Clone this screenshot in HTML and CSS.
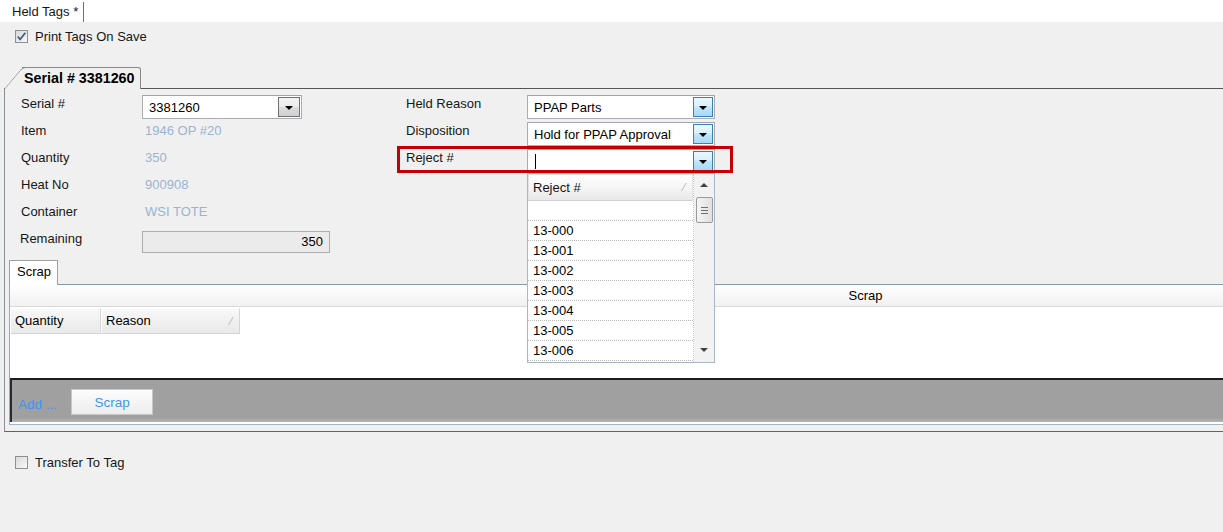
FILE: index.html
```html
<!DOCTYPE html>
<html lang="en">
<head>
  <meta charset="UTF-8">
  <meta name="viewport" content="width=device-width, initial-scale=1.0">
  <title>Held Tags</title>
  <link rel="stylesheet" href="styles.css">
</head>
<body>

<div class="doc-tabs">
  <div class="doc-tab">Held Tags *</div>
</div>

<div class="check-row print-row">
  <span class="checkbox">
    <svg width="11" height="11" viewBox="0 0 11 11"><path d="M1.8 5.6 L4.2 8.4 L9.4 1.8" fill="none" stroke="#4b5f84" stroke-width="1.8"/></svg>
  </span>
  <span>Print Tags On Save</span>
</div>

<div class="serial-block">
  <div class="tab-strip">
    <div class="serial-tab"><span>Serial # 3381260</span></div>
  </div>

  <div class="serial-panel">
    <div class="fields">
      <!-- tag details -->
      <div class="field-col">
        <div class="field-row">
          <div class="label">Serial #</div>
          <div class="combo combo-serial">
            <span class="combo-text">3381260</span>
            <span class="combo-btn grey"><i class="arrow"></i></span>
          </div>
        </div>
        <div class="field-row"><div class="label">Item</div><div class="value">1946 OP #20</div></div>
        <div class="field-row"><div class="label">Quantity</div><div class="value">350</div></div>
        <div class="field-row"><div class="label">Heat No</div><div class="value">900908</div></div>
        <div class="field-row"><div class="label">Container</div><div class="value">WSI TOTE</div></div>
        <div class="field-row">
          <div class="label remaining">Remaining</div>
          <div class="readonly-box">350</div>
        </div>
      </div>

      <!-- hold info -->
      <div class="field-col">
        <div class="field-row">
          <div class="label">Held Reason</div>
          <div class="combo">
            <span class="combo-text">PPAP Parts</span>
            <span class="combo-btn"><i class="arrow"></i></span>
          </div>
        </div>
        <div class="field-row">
          <div class="label">Disposition</div>
          <div class="combo">
            <span class="combo-text">Hold for PPAP Approval</span>
            <span class="combo-btn"><i class="arrow"></i></span>
          </div>
        </div>
        <div class="field-row">
          <div class="label">Reject #</div>
          <div class="combo combo-open">
            <span class="combo-text"><span class="caret"></span></span>
            <span class="combo-btn"><i class="arrow"></i></span>

            <div class="dropdown">
              <div class="dd-list">
                <div class="dd-head">Reject #<span class="sort-mark">&#8260;</span></div>
                <div class="dd-row"></div>
                <div class="dd-row">13-000</div>
                <div class="dd-row">13-001</div>
                <div class="dd-row">13-002</div>
                <div class="dd-row">13-003</div>
                <div class="dd-row">13-004</div>
                <div class="dd-row">13-005</div>
                <div class="dd-row">13-006</div>
              </div>
              <div class="dd-scroll">
                <span class="sb-up"></span>
                <span class="sb-thumb"><i></i><i></i><i></i></span>
                <span class="sb-down"></span>
              </div>
            </div>
          </div>
          <div class="highlight"></div>
        </div>
      </div>
    </div>

    <div class="scrap-tabs">
      <div class="scrap-tab">Scrap</div>
    </div>
    <div class="scrap-panel">
      <div class="grid-group">Scrap</div>
      <div class="grid-cols">
        <div class="col-head col-qty">Quantity</div>
        <div class="col-head col-reason">Reason<span class="sort-mark">&#8260;</span></div>
      </div>
      <div class="grid-body"></div>
      <div class="action-bar">
        <span class="add-link">Add ...</span>
        <button class="scrap-btn">Scrap</button>
      </div>
    </div>
  </div>
</div>

<div class="check-row transfer-row">
  <span class="checkbox"></span>
  <span>Transfer To Tag</span>
</div>

</body>
</html>
```

FILE: styles.css
```css
html, body {
  margin: 0;
  overflow: hidden;
}

body {
  background: #f0f0f0;
  font-family: "Liberation Sans", Arial, sans-serif;
  font-size: 13px;
  line-height: 15px;
  color: #161616;
}

/* Document tab at the top */
.doc-tabs {
  height: 22px;
  background: #fff;
  padding-left: 4px;
  display: flex;
  align-items: flex-end;
}

.doc-tab {
  height: 20px;
  line-height: 20px;
  padding: 0 5px 0 8px;
  border-right: 1px solid #6f6f6f;
  background: #fff;
}

/* Checkboxes */
.check-row {
  display: flex;
  align-items: center;
  gap: 7px;
  height: 15px;
  padding-left: 15px;
}

.print-row {
  margin-top: 7px;
}

.transfer-row {
  margin-top: 23px;
}

.checkbox {
  width: 13px;
  height: 13px;
  box-sizing: border-box;
  border: 1px solid #8e8f8f;
  background: linear-gradient(135deg, #d8d8d8, #f9f9f9);
  display: flex;
  align-items: center;
  justify-content: center;
}

/* Serial tab + panel */
.tab-strip {
  margin-top: 23px;
  height: 21px;
  display: flex;
}

.serial-tab {
  position: relative;
  z-index: 1;
  margin-left: 22px;
  box-sizing: border-box;
  height: 22px;
  padding: 0 5px 0 2px;
  border-top: 1px solid #8a8a8a;
  border-right: 1px solid #8a8a8a;
  border-top-right-radius: 3px;
  background: #f0f0f0;
  font-weight: bold;
  font-size: 14.3px;
  line-height: 20px;
  color: #000;
}

/* slanted left edge of the tab */
.serial-tab::before {
  content: "";
  position: absolute;
  z-index: -1;
  left: -18px;
  top: -1px;
  width: 26px;
  height: 22px;
  box-sizing: border-box;
  border-left: 1px solid #8a8a8a;
  border-top: 1px solid #8a8a8a;
  border-top-left-radius: 4px;
  background: #f0f0f0;
  transform: skewX(-40deg);
  transform-origin: bottom left;
}

.serial-panel {
  margin-left: 4px;
  border-left: 1px solid #8c8f96;
  border-top: 1px solid #555;
  border-bottom: 1px solid #646464;
  padding: 6px 0;
}

.fields {
  display: flex;
  gap: 76px;
  margin-left: 16px;
}

.field-row {
  position: relative;
  display: flex;
  height: 27px;
}

.label {
  flex: none;
  width: 121px;
  padding-top: 1px;
}

.label.remaining {
  margin-left: -1px;
  width: 122px;
}

.value {
  padding: 1px 0 0 3px;
  color: #99b4d1;
}

/* Combo boxes */
.combo {
  position: relative;
  box-sizing: border-box;
  width: 188px;
  height: 24px;
  border: 1px solid #abadb3;
  border-top-color: #a0a3aa;
  background: #fff;
  display: flex;
  align-items: center;
}

.combo-serial {
  width: 160px;
}

.combo-text {
  flex: 1;
  padding-left: 6px;
  color: #000;
}

.combo-open .combo-text {
  padding-left: 7px;
  display: flex;
  align-items: center;
}

.caret {
  display: inline-block;
  width: 1px;
  height: 15px;
  background: #000;
}

.combo-btn {
  flex: none;
  box-sizing: border-box;
  width: 20px;
  height: 20px;
  margin-right: 1px;
  border: 1px solid #3c7fb1;
  background: linear-gradient(#eaf6fd 0%, #d9f0fc 45%, #bee6fd 50%, #a7d9f5 100%);
  display: flex;
  align-items: center;
  justify-content: center;
}

.combo-btn.grey {
  width: 22px;
  border-color: #707070;
  background: linear-gradient(#f2f2f2 0%, #ebebeb 50%, #dddddd 50%, #cfcfcf 100%);
}

.arrow {
  width: 0;
  height: 0;
  border-left: 4px solid transparent;
  border-right: 4px solid transparent;
  border-top: 4px solid #000;
  margin-top: 1px;
}

.readonly-box {
  box-sizing: border-box;
  width: 188px;
  height: 22px;
  margin-top: 1px;
  border: 1px solid #adadad;
  background: #ebebeb;
  text-align: right;
  padding-right: 6px;
  line-height: 20px;
  color: #000;
}

/* red annotation box round the Reject # row */
.highlight {
  position: absolute;
  left: -9px;
  top: -3px;
  width: 336px;
  height: 27px;
  box-sizing: border-box;
  border: 3px solid #c40000;
  z-index: 5;
  pointer-events: none;
}

/* Open dropdown list */
.dropdown {
  position: absolute;
  left: -1px;
  top: 23px;
  z-index: 10;
  width: 188px;
  height: 190px;
  box-sizing: border-box;
  border: 1px solid #a7b7c8;
  background: #fff;
  display: flex;
}

.dd-list {
  flex: 1;
  border-right: 1px dotted #c8c8c8;
}

.dd-head {
  position: relative;
  box-sizing: border-box;
  height: 27px;
  padding: 1px 0 0 4px;
  line-height: 24px;
  border: 1px solid #e4e4e4;
  border-bottom-color: #cfcfcf;
  background: linear-gradient(#ffffff, #f3f3f3 60%, #e8e8e8);
}

.sort-mark {
  position: absolute;
  right: 7px;
  top: 0;
  color: #b0b0b0;
  font-size: 11px;
}

.dd-row {
  box-sizing: border-box;
  height: 20px;
  padding-left: 5px;
  line-height: 19px;
  border-bottom: 1px dotted #b8b8b8;
  color: #000;
}

.dd-scroll {
  flex: none;
  width: 20px;
  background: #f2f2f2;
  display: flex;
  flex-direction: column;
  align-items: center;
}

.sb-up,
.sb-down {
  width: 0;
  height: 0;
  border-left: 4px solid transparent;
  border-right: 4px solid transparent;
}

.sb-up {
  margin-top: 9px;
  border-bottom: 4px solid #404040;
}

.sb-down {
  margin-top: auto;
  margin-bottom: 10px;
  border-top: 4px solid #404040;
}

.sb-thumb {
  margin-top: 10px;
  box-sizing: border-box;
  width: 17px;
  height: 26px;
  border: 1px solid #9a9a9a;
  border-radius: 2px;
  background: linear-gradient(90deg, #f4f4f4, #e0e0e0);
  display: flex;
  flex-direction: column;
  align-items: center;
  justify-content: center;
  gap: 2px;
}

.sb-thumb i {
  display: block;
  width: 7px;
  height: 1px;
  background: #6e6e6e;
}

/* Scrap tab + grid */
.scrap-tabs {
  margin: 3px 0 0 4px;
  height: 24px;
  display: flex;
}

.scrap-tab {
  position: relative;
  box-sizing: border-box;
  width: 49px;
  height: 25px;
  padding-left: 7px;
  border: 1px solid #a0a0a0;
  border-bottom: none;
  background: #fff;
  line-height: 22px;
  color: #000;
}

.scrap-panel {
  margin-left: 4px;
  border-left: 1px solid #9aa7b5;
  border-top: 1px solid #8798ab;
  border-bottom: 1px solid #a4b4c4;
  background: #fff;
  padding-bottom: 2px;
}

.grid-group {
  height: 21px;
  line-height: 21px;
  padding-left: 498px;
  text-align: center;
  border-bottom: 1px solid #dadada;
  background: linear-gradient(#ffffff, #f1f1f1);
  color: #000;
}

.grid-cols {
  display: flex;
  margin-top: 1px;
  height: 26px;
}

.col-head {
  position: relative;
  box-sizing: border-box;
  height: 26px;
  padding-left: 4px;
  line-height: 24px;
  border: 1px solid #fff;
  border-right-color: #d5d5d5;
  border-bottom-color: #d5d5d5;
  background: linear-gradient(#f8f8f8, #e9e9e9);
  color: #000;
}

.col-qty {
  width: 91px;
}

.col-reason {
  width: 139px;
}

.grid-body {
  height: 44px;
}

.action-bar {
  box-sizing: border-box;
  height: 44px;
  display: flex;
  align-items: center;
  gap: 14px;
  padding: 6px 0 4px 6px;
  border-top: 2px solid #1c1c1c;
  border-left: 2px solid #2a2a2a;
  background: linear-gradient(#a0a0a0 90%, #b4b4b4);
}

.add-link {
  padding-top: 4px;
  color: #3f96f0;
  font-size: 13.5px;
}

.scrap-btn {
  width: 82px;
  height: 26px;
  border: 1px solid #c8c8c8;
  background: linear-gradient(#fdfdfd, #ececec);
  color: #3f96f0;
  font-family: inherit;
  font-size: 13.5px;
  padding: 0;
}
```
